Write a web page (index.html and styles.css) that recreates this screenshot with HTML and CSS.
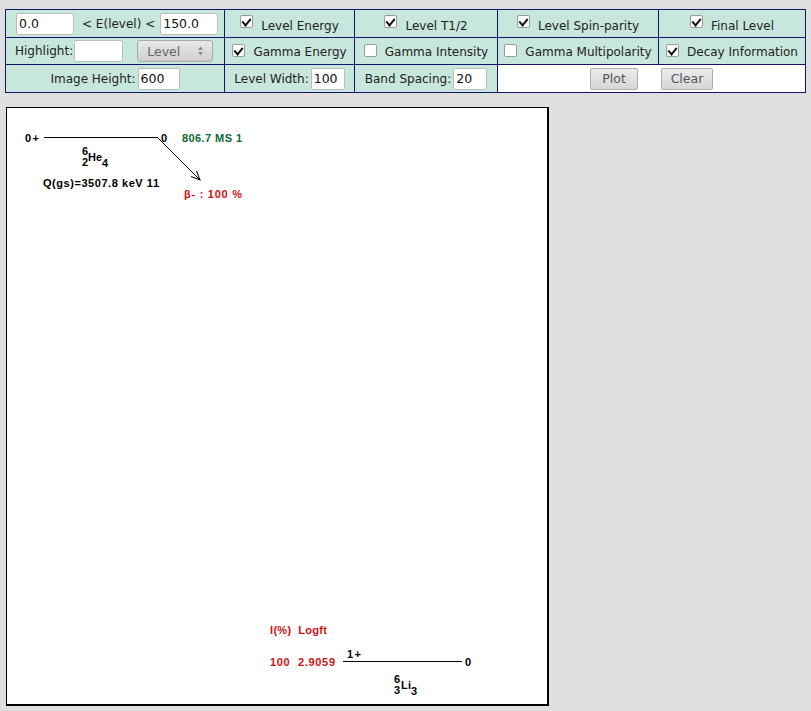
FILE: index.html
```html
<!DOCTYPE html>
<html>
<head>
<meta charset="utf-8">
<link rel="stylesheet" href="styles.css">
</head>
<body>
<table class="ctl">
  <colgroup>
    <col class="c1"><col class="c2"><col class="c3"><col class="c4"><col class="c5">
  </colgroup>
  <tr class="r1">
    <td class="range"><span class="inp w57">0.0</span><span class="lbl">&lt; E(level) &lt;</span><span class="inp w57">150.0</span></td>
    <td class="chk"><span class="box on"></span>Level Energy</td>
    <td class="chk"><span class="box on"></span>Level T1/2</td>
    <td class="chk"><span class="box on"></span>Level Spin-parity</td>
    <td class="chk"><span class="box on"></span>Final Level</td>
  </tr>
  <tr class="r2">
    <td class="hl"><span>Highlight:</span><span class="inp w48"></span><span class="sel">Level<span class="arr"><svg width="7" height="12" viewBox="0 0 7 12"><path d="M3.5 1.5 L6 5 H1 Z M1 7 H6 L3.5 10.5 Z" fill="#8a8a8a"/></svg></span></span></td>
    <td class="chk"><span class="box on"></span>Gamma Energy</td>
    <td class="chk"><span class="box"></span>Gamma Intensity</td>
    <td class="chk"><span class="box"></span>Gamma Multipolarity</td>
    <td class="chk"><span class="box on"></span>Decay Information</td>
  </tr>
  <tr class="r3">
    <td class="fld">Image Height:<span class="inp w42">600</span></td>
    <td class="fld">Level Width:<span class="inp w34">100</span></td>
    <td class="fld">Band Spacing:<span class="inp w34">20</span></td>
    <td class="btns" colspan="2"><span class="btn bplot">Plot</span><span class="btn bclear">Clear</span></td>
  </tr>
</table>

<div class="plot">
  <svg class="diagram" width="540" height="596" viewBox="0 0 540 596">
    <defs>
      <marker id="ah" markerWidth="10" markerHeight="10" refX="9" refY="5" orient="auto" markerUnits="userSpaceOnUse">
        <path d="M0 1 L9 5 L0 9" fill="none" stroke="#000" stroke-width="1"/>
      </marker>
    </defs>
    <g class="blk">
      <text x="18" y="34" textLength="14">0+</text>
      <line x1="37" y1="29.5" x2="151" y2="29.5"/>
      <text x="154" y="34">0</text>
      <text x="75" y="47">6</text>
      <text x="75" y="58">2</text>
      <text x="81" y="53" textLength="14">He</text>
      <text x="95" y="59">4</text>
      <text x="36" y="79" textLength="116">Q(gs)=3507.8 keV 11</text>
      <line x1="151" y1="30" x2="193" y2="72" marker-end="url(#ah)"/>

      <line x1="336" y1="553.5" x2="455" y2="553.5"/>
      <text x="340" y="550" textLength="14">1+</text>
      <text x="458" y="558">0</text>
      <text x="387" y="575">6</text>
      <text x="387" y="586">3</text>
      <text x="394" y="581" textLength="10">Li</text>
      <text x="404" y="587">3</text>
    </g>
    <text x="175" y="34" class="grn" textLength="60">806.7 MS 1</text>
    <text x="177" y="90" class="red" textLength="58">β- : 100 %</text>
    <text x="263" y="526" class="red" textLength="57">I(%)&#160; Logft</text>
    <text x="263" y="558" class="red" textLength="65">100&#160; 2.9059</text>
  </svg>
</div>
</body>
</html>
```
FILE: styles.css
```css
html, body {
  margin: 0;
  padding: 0;
  background: #dfdfdf;
}
body {
  padding: 9px 0 0 5px;
  font-family: "DejaVu Sans", Verdana, sans-serif;
  font-size: 12px;
  color: #222;
}
.ctl {
  border-collapse: collapse;
  table-layout: fixed;
  width: 801px;
  border: 1px solid #14146a;
}
.ctl td {
  border: 1px solid #14146a;
  background: #c8e7dc;
  padding: 0;
  white-space: nowrap;
  text-align: center;
  vertical-align: middle;
}
.c1 { width: 219px; }
.c2 { width: 130px; }
.c3 { width: 143px; }
.c4 { width: 161px; }
.c5 { width: 147px; }
.r1 td { height: 27px; }
.r2 td { height: 26px; }
.r3 td { height: 27px; }

.inp {
  display: inline-block;
  box-sizing: border-box;
  height: 22px;
  line-height: 20px;
  background: #fff;
  border: 1px solid #bdbdbd;
  border-radius: 2px;
  text-align: left;
  padding-left: 2px;
  vertical-align: middle;
  color: #111;
  font-size: 12.5px;
}
.w57 { width: 58px; }
.w48 { width: 49px; }
.w42 { width: 42px; }
.w34 { width: 34px; }

.range {
  text-align: left !important;
  padding-left: 10px !important;
}
.range .lbl { margin: 0 5px 0 8px; vertical-align: middle; }

.hl {
  text-align: left !important;
  padding-left: 9px !important;
}
.hl span { vertical-align: middle; }
.hl .inp { margin-left: 1px; }
.sel {
  display: inline-flex;
  align-items: center;
  justify-content: space-between;
  box-sizing: border-box;
  width: 76px;
  height: 22px;
  margin-left: 14px;
  padding: 0 8px 0 9px;
  border: 1px solid #a9a9a9;
  border-radius: 3px;
  background: linear-gradient(#e9e9e9, #cfcfcf);
  color: #666;
  font-size: 12.5px;
}
.arr { display: inline-flex; }

.chk { color: #222; }
.box {
  display: inline-block;
  position: relative;
  box-sizing: border-box;
  width: 13px;
  height: 13px;
  border: 1px solid #9a9a9a;
  border-radius: 2px;
  background: #fff;
  margin-right: 8px;
  vertical-align: -1px;
}
.r1 .box { vertical-align: 2px; }
.box.on::after {
  content: "";
  position: absolute;
  width: 7px;
  height: 4px;
  border-left: 2px solid #111;
  border-bottom: 2px solid #111;
  transform: rotate(-50deg) skewX(-8deg);
  transform-origin: center;
  top: 2px;
  left: 1px;
}

.fld .inp { margin-left: 2px; }

.btns {
  background: #fff !important;
}
.btn {
  display: inline-block;
  box-sizing: border-box;
  height: 22px;
  line-height: 20px;
  border: 1px solid #b0b0b0;
  border-radius: 2px;
  background: linear-gradient(#ececec, #d6d6d6);
  color: #555;
  font-size: 12.5px;
  text-align: center;
  vertical-align: middle;
}
.bplot { width: 48px; }
.bclear { width: 52px; margin-left: 23px; }

.plot {
  margin: 14px 0 0 1px;
  width: 540px;
  height: 596px;
  background: #fff;
  border-style: solid;
  border-color: #000;
  border-width: 1px 2px 2px 1px;
}
.diagram {
  display: block;
  font-family: "Liberation Sans", Arial, sans-serif;
  font-weight: bold;
  font-size: 11px;
}
.blk text { fill: #000; }
.blk line { stroke: #000; stroke-width: 1; }
.grn { fill: #0b6b2f; }
.red { fill: #d01010; }
```
